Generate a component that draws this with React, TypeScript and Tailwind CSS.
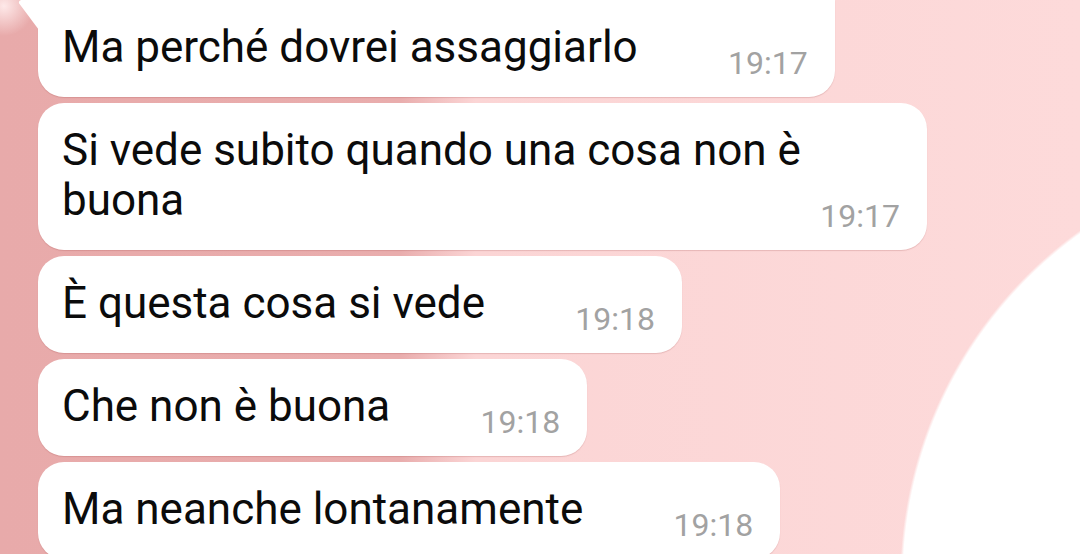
import React from "react";

type Msg = { text: string; time: string; tail?: boolean };

const messages: Msg[] = [
  { text: "Ma perché dovrei assaggiarlo", time: "19:17", tail: true },
  { text: "Si vede subito quando una cosa non è buona", time: "19:17" },
  { text: "È questa cosa si vede", time: "19:18" },
  { text: "Che non è buona", time: "19:18" },
  { text: "Ma neanche lontanamente", time: "19:18" },
];

function Bubble({ msg }: { msg: Msg }) {
  return (
    <div
      className={
        msg.tail
          ? "relative w-fit max-w-[889px] rounded-[26px] rounded-tl-none rounded-tr-none bg-white pl-[24px] pr-[27px] pt-[22px] pb-[25px] shadow-[0_1px_1px_rgba(150,60,60,0.2)]"
          : "relative w-fit max-w-[889px] rounded-[26px] bg-white pl-[24px] pr-[27px] pt-[22px] pb-[25px] shadow-[0_1px_1px_rgba(150,60,60,0.2)]"
      }
    >
      {/* tail of the first message in a group */}
      {msg.tail && (
        <svg
          className="absolute left-[-20px] top-0"
          width="21"
          height="30"
          viewBox="0 0 21 30"
        >
          <path d="M3 0 H21 V30 L1.2 3.6 Q0 1.2 3 0 Z" fill="#ffffff" />
        </svg>
      )}
      <p className="text-[44px] leading-[50px] text-[#0b0b0b]">
        {msg.text}
        <span className="inline-block w-[170px]" />
      </p>
      <span className="absolute right-[27px] bottom-[18px] text-[32px] leading-[32px] text-[#a2a2a2]">
        {msg.time}
      </span>
    </div>
  );
}

export default function App() {
  return (
    <div className="w-[1080px] h-[554px] overflow-hidden font-['Roboto',sans-serif] bg-[radial-gradient(circle_30px_at_4px_6px,rgba(255,236,236,0.95),rgba(255,236,236,0)),radial-gradient(circle_430px_at_1330px_580px,#ffffff_99.3%,rgba(255,255,255,0)_100%),linear-gradient(to_right,#e8aaaa_0%,#e9adad_37%,#fbd5d5_44%,#fddada_100%)]">
      <div className="flex flex-col gap-[6px] pl-[38px]">
        {messages.map((m, i) => (
          <Bubble key={i} msg={m} />
        ))}
      </div>
    </div>
  );
}
